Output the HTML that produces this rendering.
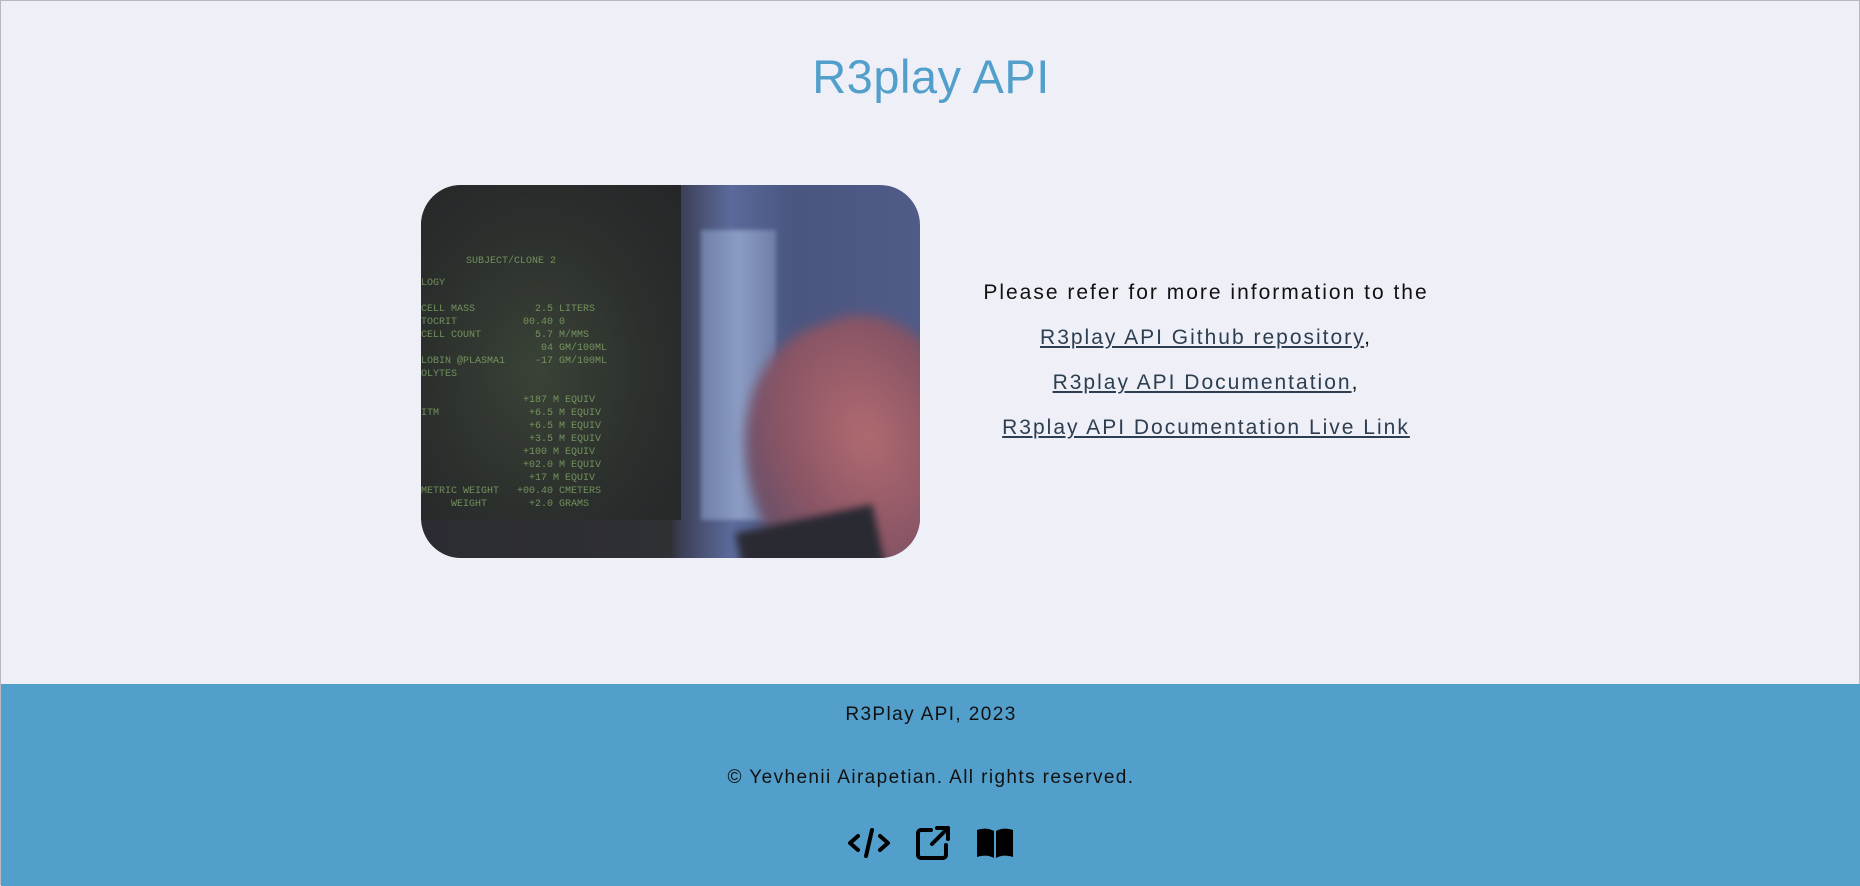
<!DOCTYPE html>
<html><head><meta charset="utf-8"><style>
*{margin:0;padding:0;box-sizing:border-box}
html,body{width:1860px;height:885px;overflow:hidden;background:#eff0f7;font-family:"Liberation Sans",sans-serif}
.page{position:absolute;left:0;top:0;width:1860px;height:885px;border:1px solid #b8b9c0;border-bottom:none}
h1{position:absolute;top:48px;left:0;width:1860px;text-align:center;color:#529fcb;font-weight:400;font-size:47px;letter-spacing:0.5px}
.img{position:absolute;left:420px;top:184px;width:499px;height:373px;border-radius:40px;overflow:hidden;
background:linear-gradient(90deg,#2c2b33 0%,#2e3034 50%,#3b3f55 52%,#505a80 58%,#5a6a9a 62%,#4a5580 75%,#505b88 100%)}
.scr{position:absolute;left:0;top:0;width:260px;height:335px;background:radial-gradient(ellipse at 45% 55%,#3a4236 0%,#2a2e2c 60%,#262629 100%)}
.scr div{position:absolute;color:#8fb870;font-family:"Liberation Mono",monospace;font-size:10px;line-height:13px;opacity:.7;white-space:pre}
.hand{position:absolute;right:-60px;bottom:-60px;width:230px;height:300px;border-radius:50% 40% 0 0;background:radial-gradient(ellipse at 55% 40%,#b06a70 0%,#8a5565 45%,#5a4d6a 85%);transform:rotate(-20deg);filter:blur(6px)}
.paper{position:absolute;left:280px;top:45px;width:75px;height:290px;background:linear-gradient(90deg,#6e7ea8,#8b9cc4,#6e7ea8);filter:blur(2px)}
.sleeve{position:absolute;left:320px;bottom:-30px;width:140px;height:70px;background:#2a2a33;transform:rotate(-12deg);filter:blur(4px)}
.txt{position:absolute;left:855px;width:700px;text-align:center;font-size:21px;letter-spacing:2px;color:#111}
.txt a{color:#2c3e50;text-decoration:underline}
footer{position:absolute;left:0;top:683px;width:1860px;height:202px;background:#529fcb;text-align:center;color:#111;font-size:19px;letter-spacing:1.4px}
.f1{position:absolute;top:20px;width:100%}
.f2{position:absolute;top:83px;width:100%}
.icons{position:absolute;top:141px;left:846px;display:flex;gap:24px;align-items:center}
</style></head><body><div class="page">
<h1>R3play API</h1>
<div class="img">
<div class="scr"><div style="left:45px;top:70px">SUBJECT/CLONE 2</div>
<div style="left:0;top:92px">LOGY

CELL MASS          2.5 LITERS
TOCRIT           00.40 0
CELL COUNT         5.7 M/MMS
                    04 GM/100ML
LOBIN @PLASMA1     -17 GM/100ML
OLYTES

                 +187 M EQUIV
ITM               +6.5 M EQUIV
                  +6.5 M EQUIV
                  +3.5 M EQUIV
                 +100 M EQUIV
                 +02.0 M EQUIV
                  +17 M EQUIV
METRIC WEIGHT   +00.40 CMETERS
     WEIGHT       +2.0 GRAMS</div></div>
<div class="paper"></div>
<div class="hand"></div>
<div class="sleeve"></div>
</div>
<div class="txt" style="top:280px">Please refer for more information to the</div>
<div class="txt" style="top:325px"><a>R3play API Github repository</a>,</div>
<div class="txt" style="top:370px"><a>R3play API Documentation</a>,</div>
<div class="txt" style="top:415px"><a>R3play API Documentation Live Link</a></div>
<footer>
<div class="f1">R3Play API, 2023</div>
<div class="f2">© Yevhenii Airapetian. All rights reserved.</div>
<div class="icons">
<svg width="44" height="34" viewBox="0 0 44 34" fill="none" stroke="#000" stroke-width="4" stroke-linecap="round" stroke-linejoin="round"><path d="M11 10L3 17l8 7M33 10l8 7-8 7M25 4l-6 26"/></svg>
<svg width="36" height="36" viewBox="0 0 36 36" fill="none" stroke="#000" stroke-width="4" stroke-linecap="round" stroke-linejoin="round"><path d="M16 5H6a3 3 0 0 0-3 3v22a3 3 0 0 0 3 3h22a3 3 0 0 0 3-3V20M22 3h11v11M33 3L17 19"/></svg>
<svg width="40" height="34" viewBox="0 0 40 34"><path d="M2 4c6-2 12-2 17 1v27c-5-3-11-3-17-1z M21 5c5-3 11-3 17-1v27c-6-2-12-2-17 1z" fill="#000"/></svg>
</div>
</footer>
</div></body></html>
